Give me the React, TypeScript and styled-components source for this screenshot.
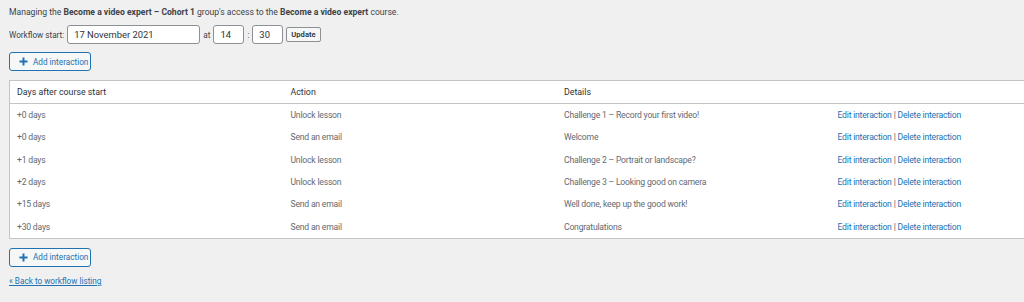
import styled, { createGlobalStyle } from 'styled-components'

const GlobalStyle = createGlobalStyle`
  html, body {
    margin: 0;
    padding: 0;
    background: #f0f0f1;
    overflow: hidden;
  }
  body {
    font-family: Roboto, "Liberation Sans", sans-serif;
    color: #3c434a;
  }
`;

const Page = styled.div`
  padding: 6px 0 0 9px;
  width: 1200px;
  font-size: 9px;
`;

const Intro = styled.p`
  margin: 0 0 7px;
  line-height: 12px;
  font-size: 8.6px;
  b {
    font-weight: 700;
    color: #3c434a;
  }
`;

const FormRow = styled.div`
  display: flex;
  align-items: center;
  height: 19px;
  margin-bottom: 8px;
`;

const Label = styled.span<{ $left?: number; $right?: number }>`
  font-size: 8.2px;
  margin: 0 ${(p) => p.$right ?? 3}px 0 ${(p) => p.$left ?? 3}px;
`;

const TextInput = styled.input<{ $w: number }>`
  box-sizing: border-box;
  width: ${(p) => p.$w}px;
  height: 19px;
  padding: 0 6px;
  border: 1px solid #8c8f94;
  border-radius: 3px;
  background: #fff;
  color: #2c3338;
  font-family: Roboto, "Liberation Sans", sans-serif;
  font-size: 9.4px;
  outline: none;
`;

const SmallButton = styled.button`
  box-sizing: border-box;
  height: 15px;
  margin-left: 3px;
  padding: 0 4px;
  border: 1px solid #8c8f94;
  border-radius: 2px;
  background: #f6f7f7;
  color: #2c3338;
  font-family: Roboto, "Liberation Sans", sans-serif;
  font-size: 7.6px;
  font-weight: 600;
  line-height: 13px;
`;

const AddButton = styled.button`
  box-sizing: border-box;
  display: flex;
  align-items: center;
  gap: 5px;
  width: 82px;
  height: 19px;
  padding: 0 0 0 9px;
  border: 1px solid #2271b1;
  border-radius: 3px;
  background: #f6f7f7;
  color: #2271b1;
  font-family: Roboto, "Liberation Sans", sans-serif;
  font-size: 8.2px;
  white-space: nowrap;
  cursor: pointer;
`;

const Table = styled.table`
  margin: 9px 0 9px;
  width: 1100px;
  border-collapse: collapse;
  background: #fff;
  border: 1px solid #c3c4c7;
  table-layout: fixed;
`;

const HeadCell = styled.th<{ $w?: number }>`
  text-align: left;
  font-weight: 400;
  font-size: 8.8px;
  color: #2c3338;
  height: 22px;
  padding: 0 7px;
  border-bottom: 1px solid #c3c4c7;
  width: ${(p) => (p.$w ? `${p.$w}px` : 'auto')};
`;

const Cell = styled.td`
  height: 22.3px;
  padding: 0 7px;
  font-size: 8.6px;
  letter-spacing: -0.2px;
  color: #646970;
  white-space: nowrap;
`;

const Link = styled.a`
  color: #2271b1;
  text-decoration: none;
`;

const Sep = styled.span`
  color: #50575e;
  margin: 0 2px;
`;

const BackLink = styled.a`
  display: block;
  margin-top: 9px;
  color: #2271b1;
  font-size: 8.2px;
  text-decoration: underline;
`;

const rows = [
  ['+0 days', 'Unlock lesson', 'Challenge 1 – Record your first video!'],
  ['+0 days', 'Send an email', 'Welcome'],
  ['+1 days', 'Unlock lesson', 'Challenge 2 – Portrait or landscape?'],
  ['+2 days', 'Unlock lesson', 'Challenge 3 – Looking good on camera'],
  ['+15 days', 'Send an email', 'Well done, keep up the good work!'],
  ['+30 days', 'Send an email', 'Congratulations'],
];

function Plus() {
  return (
    <svg width="9" height="9" viewBox="0 0 10 10">
      <path d="M5 0.5v9M0.5 5h9" stroke="#2271b1" strokeWidth="2.2" />
    </svg>
  );
}

export default function App() {
  return (
    <Page>
      <GlobalStyle />
      <Intro>
        Managing the <b>Become a video expert – Cohort 1</b> group's access to the{' '}
        <b>Become a video expert</b> course.
      </Intro>
      <FormRow>
        <Label $left={0} $right={3}>Workflow start:</Label>
        <TextInput $w={133} defaultValue="17 November 2021" />
        <Label>at</Label>
        <TextInput $w={31} defaultValue="14" />
        <Label>:</Label>
        <TextInput $w={31} defaultValue="30" />
        <SmallButton>Update</SmallButton>
      </FormRow>
      <AddButton>
        <Plus />
        Add interaction
      </AddButton>
      <Table>
        <thead>
          <tr>
            <HeadCell $w={259.5}>Days after course start</HeadCell>
            <HeadCell $w={259.5}>Action</HeadCell>
            <HeadCell $w={259.5}>Details</HeadCell>
            <HeadCell></HeadCell>
          </tr>
        </thead>
        <tbody>
          {rows.map((r, i) => (
            <tr key={i}>
              <Cell>{r[0]}</Cell>
              <Cell>{r[1]}</Cell>
              <Cell>{r[2]}</Cell>
              <Cell>
                <Link href="#">Edit interaction</Link>
                <Sep>|</Sep>
                <Link href="#">Delete interaction</Link>
              </Cell>
            </tr>
          ))}
        </tbody>
      </Table>
      <AddButton>
        <Plus />
        Add interaction
      </AddButton>
      <BackLink href="#">« Back to workflow listing</BackLink>
    </Page>
  );
}
